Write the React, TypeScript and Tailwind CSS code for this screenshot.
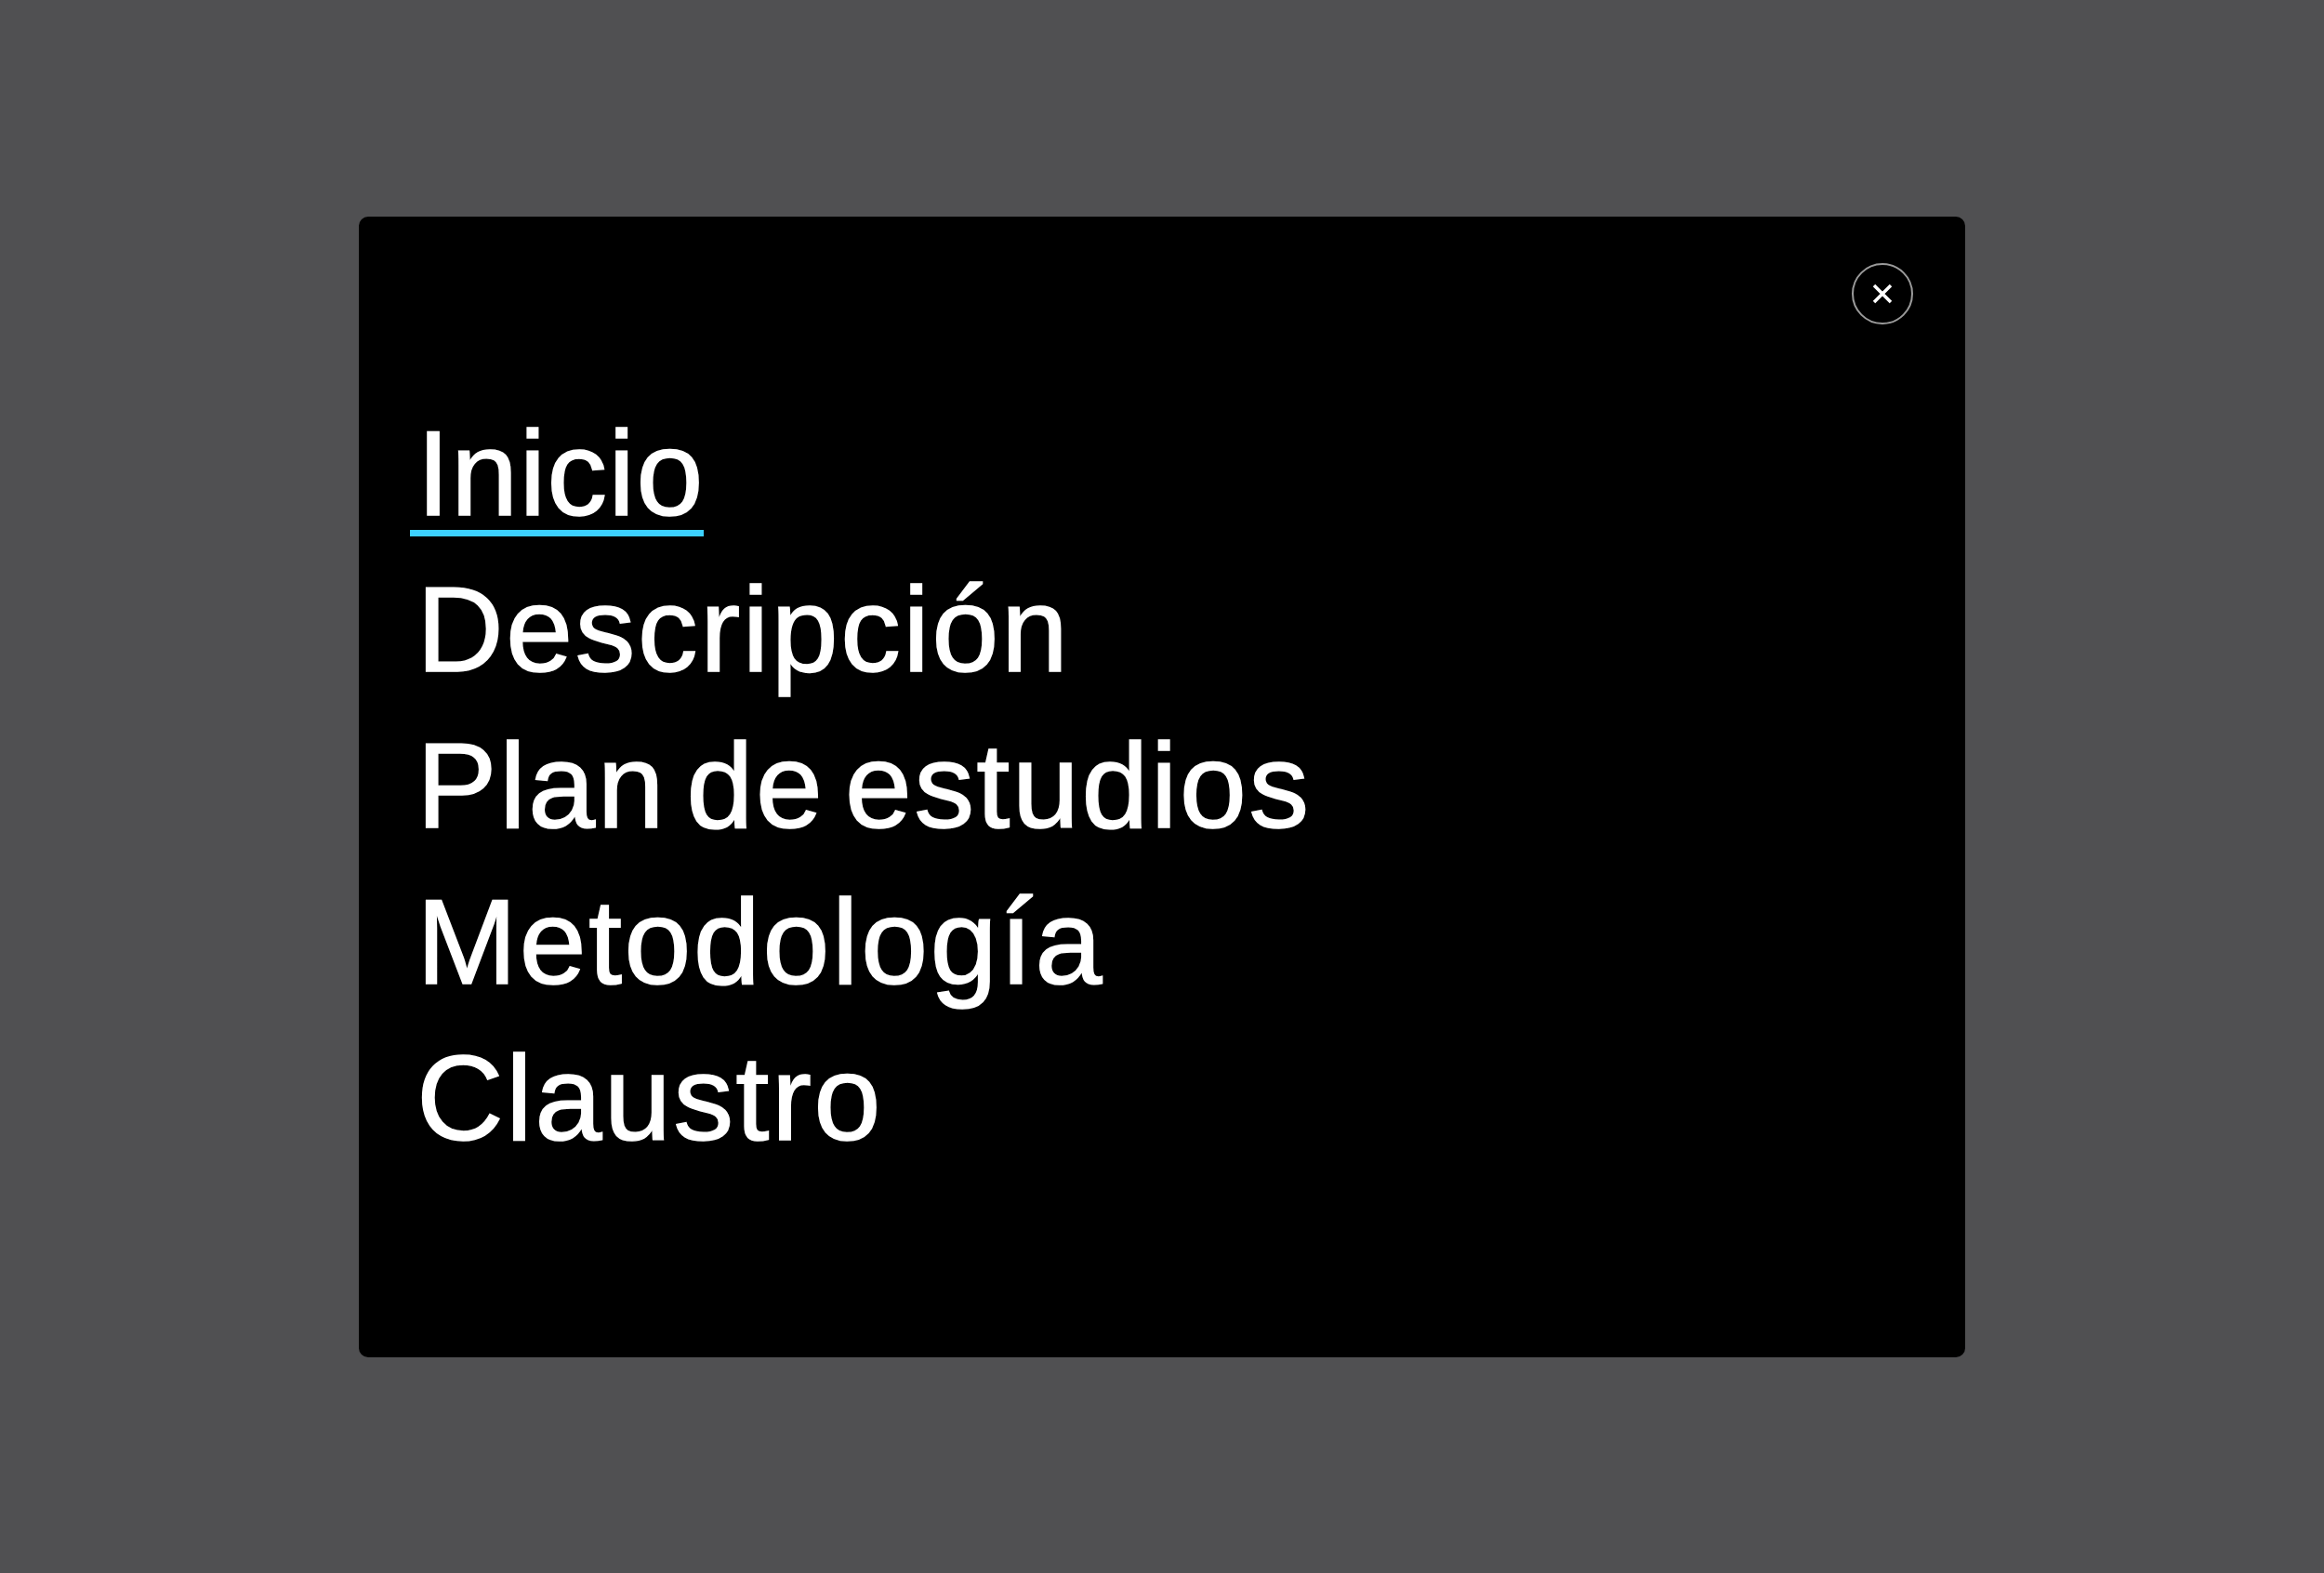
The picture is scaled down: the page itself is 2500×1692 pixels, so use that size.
const items = ['Inicio', 'Descripción', 'Plan de estudios', 'Metodología', 'Claustro']

export default function App() {
  return (
    <div className="flex h-[1692px] w-[2500px] items-center justify-center overflow-hidden bg-[#505052] font-['Liberation_Sans',sans-serif]">
      <div className="flex h-[1227px] w-[1728px] flex-col rounded-[10px] bg-black pl-[55px] pr-[56px] pt-[50px]">
        <button className="flex h-[66px] w-[66px] items-center justify-center self-end rounded-full border-2 border-[#9a9a9a] text-white">
          <svg width="22" height="22" viewBox="0 0 22 22" fill="none" stroke="currentColor" strokeWidth="3.5">
            <path d="M2 2 L20 20 M20 2 L2 20" />
          </svg>
        </button>
        <ul className="mt-[83px] flex flex-col">
          {items.map((item, index) => (
            <li key={item} className="h-[168px]">
              <a
                className={`inline-block h-[145px] pl-[7px] text-[130px] leading-[154px] text-white [word-spacing:-17px] [-webkit-text-stroke:1.5px_white] ${
                  index === 0 ? 'w-[316px] border-b-[7px] border-[#3dd1ff] tracking-[1px]' : 'tracking-[2.2px]'
                }`}
              >
                {item}
              </a>
            </li>
          ))}
        </ul>
      </div>
    </div>
  )
}
